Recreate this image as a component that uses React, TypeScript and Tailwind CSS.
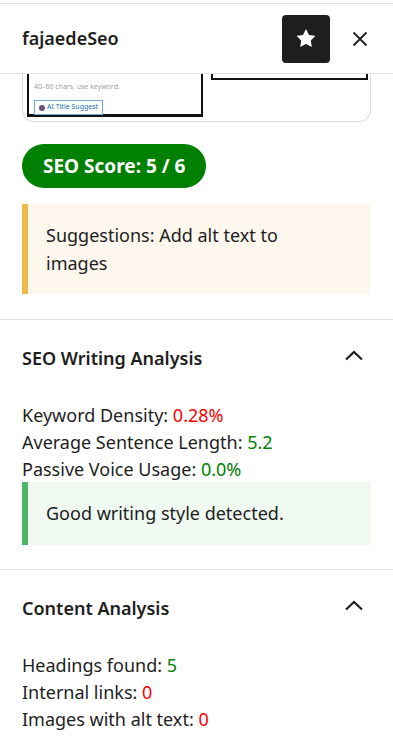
import React from "react";

const Chevron = () => (
  <svg width="24" height="24" viewBox="0 0 24 24">
    <polyline points="4,15.5 12,8 20,15.5" fill="none" stroke="#1e1e1e" strokeWidth="2.2" />
  </svg>
);

export default function App() {
  return (
    <div
      className="w-[393px] h-[755px] bg-white text-[#1e1e1e] overflow-hidden"
      style={{ fontFamily: '"Noto Sans", "Open Sans", sans-serif' }}
    >
      <div className="h-[3px]" />
      {/* Header */}
      <div className="h-[71px] border-t border-b border-[#e0e0e0] flex items-center pl-[22px] pr-[9px]">
        <div className="flex-1 text-[18px] font-semibold">fajaedeSeo</div>
        <div className="w-[48px] h-[48px] bg-[#1e1e1e] rounded-[4px] flex items-center justify-center">
          <svg width="30" height="30" viewBox="0 0 24 24">
            <path
              d="M11.776 4.454a.25.25 0 01.448 0l2.069 4.192a.25.25 0 00.188.137l4.626.672a.25.25 0 01.139.426l-3.348 3.263a.25.25 0 00-.072.222l.79 4.607a.25.25 0 01-.362.263l-4.138-2.175a.25.25 0 00-.232 0l-4.138 2.175a.25.25 0 01-.363-.263l.79-4.607a.25.25 0 00-.071-.222L4.754 9.881a.25.25 0 01.139-.426l4.626-.672a.25.25 0 00.188-.137l2.069-4.192z"
              fill="white"
            />
          </svg>
        </div>
        <div className="w-[48px] h-[48px] flex items-center justify-center ml-[6px]">
          <svg width="24" height="24" viewBox="0 0 24 24">
            <path d="M5.5 5.5l13 13M18.5 5.5l-13 13" stroke="#1e1e1e" strokeWidth="1.8" fill="none" />
          </svg>
        </div>
      </div>

      {/* Cropped preview card */}
      <div className="mx-[22px] h-[48px] border-l border-r border-b border-[#dddddd] rounded-b-[12px] flex items-start gap-[8px] pl-[4px] pr-[2px]">
        <div className="w-[176px] h-[43px] border-l-2 border-r-2 border-b-[3px] border-[#111] pl-[5px] pt-[8px]">
          <div className="text-[7px] text-[#999]" style={{ fontFamily: '"Open Sans", sans-serif' }}>
            40–60 chars, use keyword.
          </div>
          <div className="mt-[7px] inline-flex items-center gap-[2px] border border-[#6fa8dc] px-[4px] h-[15px] text-[7px] text-[#2271b1]">
            <span className="inline-block w-[6px] h-[6px] rounded-full bg-[#6b4f7a]" />
            AI Title Suggest
          </div>
        </div>
        <div className="flex-1 h-[6px] border-l-2 border-r-2 border-b-2 border-[#111]" />
      </div>

      {/* Score */}
      <div className="px-[22px] pt-[22px]">
        <div className="inline-flex items-center h-[44px] px-[21px] rounded-full bg-[#008000] text-white text-[19px] font-bold">
          SEO Score: 5 / 6
        </div>
        <div className="mt-[16px] border-l-[6px] border-[#f0b849] bg-[#fef7ee] py-[17px] pl-[18px] pr-[60px] text-[18px] leading-[28px]">
          Suggestions: Add alt text to images
        </div>
      </div>

      <div className="mt-[25px] border-t border-[#e0e0e0]" />

      {/* SEO Writing Analysis */}
      <div className="px-[22px]">
        <div className="h-[76px] flex items-center justify-between">
          <div className="text-[18px] font-semibold">SEO Writing Analysis</div>
          <div className="mr-[5px] mt-[-5px]">
            <Chevron />
          </div>
        </div>
        <div className="text-[18px] leading-[27px] pt-[6px]">
          <div>
            Keyword Density: <span className="text-[#ff0000]">0.28%</span>
          </div>
          <div>
            Average Sentence Length: <span className="text-[#008000]">5.2</span>
          </div>
          <div>
            Passive Voice Usage: <span className="text-[#008000]">0.0%</span>
          </div>
        </div>
        <div className="mt-[-1px] border-l-[6px] border-[#4ab866] bg-[#eff8f1] h-[63px] flex items-center pl-[18px] text-[18px]">
          Good writing style detected.
        </div>
      </div>

      <div className="mt-[24px] border-t border-[#e0e0e0]" />

      {/* Content Analysis */}
      <div className="px-[22px]">
        <div className="h-[76px] flex items-center justify-between">
          <div className="text-[18px] font-semibold">Content Analysis</div>
          <div className="mr-[5px] mt-[-5px]">
            <Chevron />
          </div>
        </div>
        <div className="text-[18px] leading-[27px] pt-[6px]">
          <div>
            Headings found: <span className="text-[#008000]">5</span>
          </div>
          <div>
            Internal links: <span className="text-[#ff0000]">0</span>
          </div>
          <div>
            Images with alt text: <span className="text-[#ff0000]">0</span>
          </div>
        </div>
      </div>
    </div>
  );
}
